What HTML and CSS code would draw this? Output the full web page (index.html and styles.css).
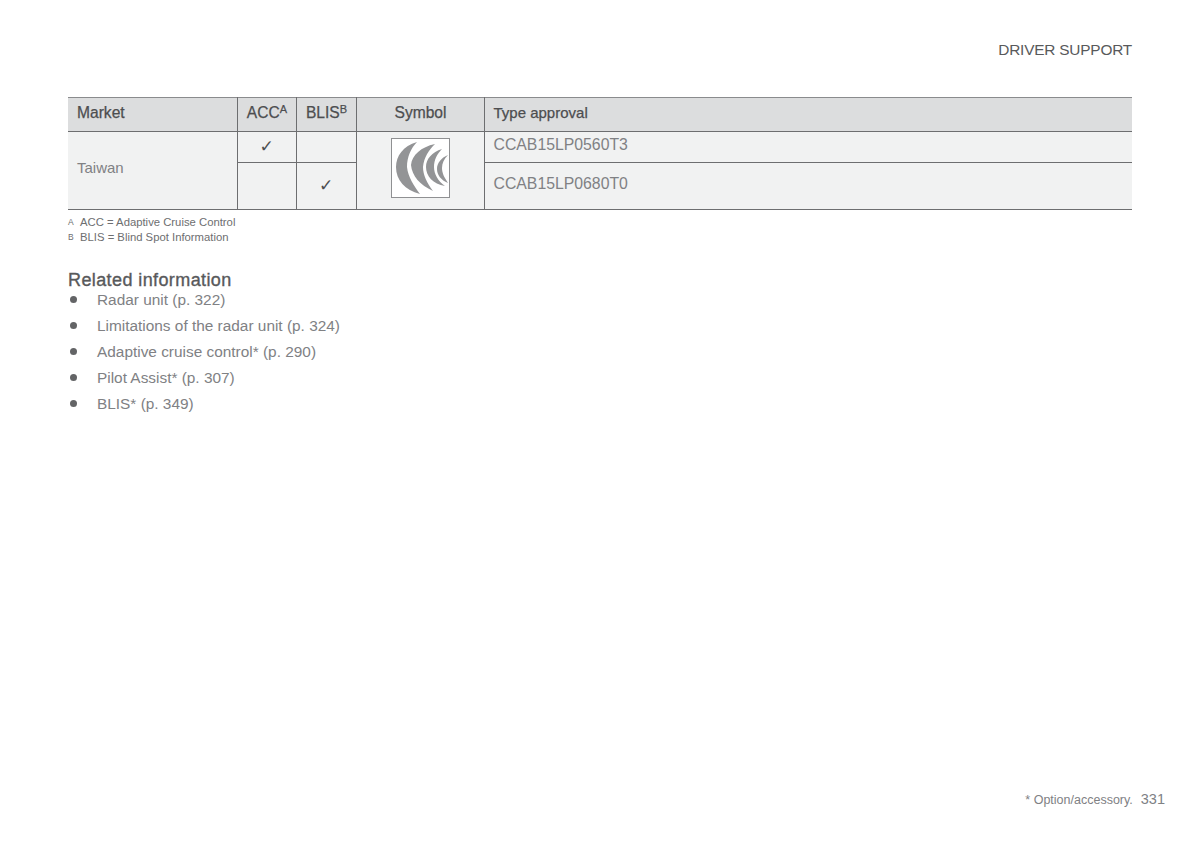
FILE: index.html
```html
<!DOCTYPE html>
<html lang="en">
<head>
<meta charset="utf-8">
<title>Driver support</title>
<link rel="stylesheet" href="styles.css">
</head>
<body>
<div class="page">
  <header class="running-head">DRIVER SUPPORT</header>
  <table class="approval">
    <colgroup>
      <col class="c-market"><col class="c-acc"><col class="c-blis"><col class="c-symbol"><col>
    </colgroup>
    <thead>
      <tr>
        <th class="left">Market</th>
        <th>ACC<sup>A</sup></th>
        <th>BLIS<sup>B</sup></th>
        <th>Symbol</th>
        <th class="left">Type approval</th>
      </tr>
    </thead>
    <tbody>
      <tr class="r1">
        <td rowspan="2" class="market">Taiwan</td>
        <td class="check">✓</td>
        <td></td>
        <td rowspan="2" class="symbol">
          <div class="symbol-box">
            <svg width="57" height="58" viewBox="0 0 57 58" aria-hidden="true">
              <g fill="#939496">
                <path d="M25 3C11 7 4 17 4 28C4 41 13 51 28 55C22 47 16 38 15 28C15 18 19 9 25 3Z"/>
                <path d="M43 5C29 8 20 16 19 26C20 37 28 46 41 52C35 44 31 36 31 28C32 18 37 11 43 5Z"/>
                <path d="M50 10C40 13 34 20 34 28C34 37 41 45 53 47C46 42 42 35 42 28C42 21 45 15 50 10Z"/>
                <path d="M56 16C49 19 45 24 45 30C45 36 49 41 56 44C52 38 50 34 50 29C50 24 52 20 56 16Z"/>
              </g>
            </svg>
          </div>
        </td>
        <td class="code">CCAB15LP0560T3</td>
      </tr>
      <tr class="r2">
        <td></td>
        <td class="check">✓</td>
        <td class="code">CCAB15LP0680T0</td>
      </tr>
    </tbody>
  </table>
  <div class="notes">
    <div class="note"><span class="mark">A</span>ACC = Adaptive Cruise Control</div>
    <div class="note"><span class="mark">B</span>BLIS = Blind Spot Information</div>
  </div>
  <h2 class="related-title">Related information</h2>
  <ul class="related">
    <li>Radar unit (p. 322)</li>
    <li>Limitations of the radar unit (p. 324)</li>
    <li>Adaptive cruise control* (p. 290)</li>
    <li>Pilot Assist* (p. 307)</li>
    <li>BLIS* (p. 349)</li>
  </ul>
  <footer class="foot">
    <span class="option">* Option/accessory.</span>
    <span class="pageno">331</span>
  </footer>
</div>
</body>
</html>
```
FILE: styles.css
```css
* { box-sizing: border-box; }
html, body { margin: 0; padding: 0; background: #fff; }
body { font-family: "Liberation Sans", sans-serif; color: #77787b; }
.page {
  width: 1200px;
  height: 845px;
  padding: 40px 68px 0;
  display: flex;
  flex-direction: column;
}
.running-head {
  align-self: flex-end;
  font-size: 15.4px;
  line-height: 19px;
  color: #58595b;
  letter-spacing: -0.2px;
}
.approval {
  margin-top: 38px;
  width: 1064px;
  border-collapse: collapse;
  table-layout: fixed;
  font-size: 16px;
}
.c-market { width: 169px; }
.c-acc { width: 59px; }
.c-blis { width: 60px; }
.c-symbol { width: 128px; }
.approval th {
  height: 34px;
  padding: 0 8px 4px 9px;
  background: #dcddde;
  color: #4d4e50;
  font-size: 15.6px;
  font-weight: 400;
  text-align: center;
  border: 1px solid #6d6e70;
  border-top-color: #8a8b8d;
  -webkit-text-stroke: 0.25px #4d4e50;
}
.approval th.left { text-align: left; }
.approval th.left:last-child { font-size: 15px; }
.approval th:first-child, .approval td:first-child { border-left: 0; }
.approval th:last-child, .approval td:last-child { border-right: 0; }
.approval sup { font-size: 11px; line-height: 0; vertical-align: 5px; }
.approval td {
  padding: 0 8px;
  background: #f1f2f2;
  border: 1px solid #6d6e70;
  color: #808184;
}
.r1 td { height: 31px; }
.r2 td { height: 47px; }
.approval .market { padding: 0 0 6px 9px; font-size: 15px; }
.approval .check { text-align: center; color: #4d4e50; font-size: 17px; font-family: "DejaVu Sans", sans-serif; padding-bottom: 3px; }
.approval .symbol { padding: 0 0 5px; }
.symbol-box {
  width: 59px;
  height: 60px;
  margin: 0 auto;
  border: 1px solid #8f9092;
  background: #fff;
  display: flex;
  align-items: center;
  justify-content: center;
}
.approval .code { padding: 0 8px 4px 9px; font-size: 15.8px; }
.notes { margin-top: 5px; }
.note {
  font-size: 11.3px;
  line-height: 14.5px;
  color: #6d6e70;
  display: flex;
}
.mark { width: 12px; font-size: 8.5px; }
.related-title {
  margin: 26px 0 0;
  font-size: 18px;
  line-height: 21px;
  letter-spacing: 0.4px;
  font-weight: 400;
  color: #58595b;
  -webkit-text-stroke: 0.35px #58595b;
}
.related {
  list-style: none;
  margin: -1px 0 0;
  padding: 0;
  font-size: 15.4px;
  color: #808184;
}
.related li {
  height: 26px;
  line-height: 20px;
  padding-left: 29px;
  position: relative;
}
.related li::before {
  content: "";
  position: absolute;
  left: 2px;
  top: 6px;
  width: 7px;
  height: 7px;
  border-radius: 50%;
  background: #636466;
}
.foot {
  margin-top: auto;
  margin-right: -33px;
  margin-bottom: 38px;
  display: flex;
  justify-content: flex-end;
  align-items: baseline;
  gap: 8px;
  color: #808184;
}
.option { font-size: 12.5px; }
.pageno { font-size: 14.5px; }
```
